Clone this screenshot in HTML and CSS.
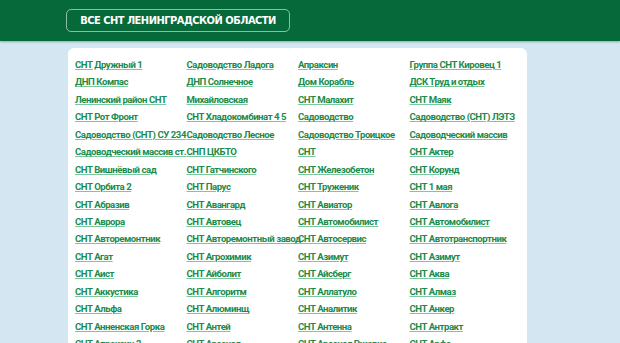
FILE: index.html
```html
<!doctype html>
<html lang="ru">
    <head>
        <meta charset="UTF-8" />
        <meta name="viewport" content="width=device-width, initial-scale=1.0" />
        <title>Все СНТ Ленинградской области</title>
        <link rel="stylesheet" href="styles.css">
    </head>
    <body>
        <header class="top-bar">
            <a class="title-btn" href="#">Все СНТ Ленинградской области</a>
        </header>

        <main class="list-card">
            <ul class="snt-list">
                <li><a href="#">СНТ Дружный 1</a></li>
                <li><a href="#">Садоводство Ладога</a></li>
                <li><a href="#">Апраксин</a></li>
                <li><a href="#">Группа СНТ Кировец 1</a></li>

                <li><a href="#">ДНП Компас</a></li>
                <li><a href="#">ДНП Солнечное</a></li>
                <li><a href="#">Дом Корабль</a></li>
                <li><a href="#">ДСК Труд и отдых</a></li>

                <li><a href="#">Ленинский район СНТ</a></li>
                <li><a href="#">Михайловская</a></li>
                <li><a href="#">СНТ Малахит</a></li>
                <li><a href="#">СНТ Маяк</a></li>

                <li><a href="#">СНТ Рот Фронт</a></li>
                <li><a href="#">СНТ Хладокомбинат 4 5</a></li>
                <li><a href="#">Садоводство</a></li>
                <li><a href="#">Садоводство (СНТ) ЛЭТЗ</a></li>

                <li><a href="#">Садоводство (СНТ) СУ 234</a></li>
                <li><a href="#">Садоводство Лесное</a></li>
                <li><a href="#">Садоводство Троицкое</a></li>
                <li><a href="#">Садоводческий массив</a></li>

                <li><a href="#">Садоводческий массив ст.</a></li>
                <li><a href="#">СНП ЦКБТО</a></li>
                <li><a href="#">СНТ</a></li>
                <li><a href="#">СНТ Актер</a></li>

                <li><a href="#">СНТ Вишнёвый сад</a></li>
                <li><a href="#">СНТ Гатчинского</a></li>
                <li><a href="#">СНТ Железобетон</a></li>
                <li><a href="#">СНТ Корунд</a></li>

                <li><a href="#">СНТ Орбита 2</a></li>
                <li><a href="#">СНТ Парус</a></li>
                <li><a href="#">СНТ Труженик</a></li>
                <li><a href="#">СНТ 1 мая</a></li>

                <li><a href="#">СНТ Абразив</a></li>
                <li><a href="#">СНТ Авангард</a></li>
                <li><a href="#">СНТ Авиатор</a></li>
                <li><a href="#">СНТ Авлога</a></li>

                <li><a href="#">СНТ Аврора</a></li>
                <li><a href="#">СНТ Автовец</a></li>
                <li><a href="#">СНТ Автомобилист</a></li>
                <li><a href="#">СНТ Автомобилист</a></li>

                <li><a href="#">СНТ Авторемонтник</a></li>
                <li><a href="#">СНТ Авторемонтный завод</a></li>
                <li><a href="#">СНТ Автосервис</a></li>
                <li><a href="#">СНТ Автотранспортник</a></li>

                <li><a href="#">СНТ Агат</a></li>
                <li><a href="#">СНТ Агрохимик</a></li>
                <li><a href="#">СНТ Азимут</a></li>
                <li><a href="#">СНТ Азимут</a></li>

                <li><a href="#">СНТ Аист</a></li>
                <li><a href="#">СНТ Айболит</a></li>
                <li><a href="#">СНТ Айсберг</a></li>
                <li><a href="#">СНТ Аква</a></li>

                <li><a href="#">СНТ Аккустика</a></li>
                <li><a href="#">СНТ Алгоритм</a></li>
                <li><a href="#">СНТ Аллатуло</a></li>
                <li><a href="#">СНТ Алмаз</a></li>

                <li><a href="#">СНТ Альфа</a></li>
                <li><a href="#">СНТ Алюминщ</a></li>
                <li><a href="#">СНТ Аналитик</a></li>
                <li><a href="#">СНТ Анкер</a></li>

                <li><a href="#">СНТ Анненская Горка</a></li>
                <li><a href="#">СНТ Антей</a></li>
                <li><a href="#">СНТ Антенна</a></li>
                <li><a href="#">СНТ Антракт</a></li>

                <li><a href="#">СНТ Апраксин 2</a></li>
                <li><a href="#">СНТ Арсенал</a></li>
                <li><a href="#">СНТ Арсенал Ржевка</a></li>
                <li><a href="#">СНТ Арфа</a></li>
            </ul>
        </main>
    </body>
</html>
```

FILE: styles.css
```css
body {
    font-family: Roboto, "Liberation Sans", sans-serif;
    margin: 0;
    padding: 0;
    background-color: #d4e6f1;
}

.top-bar {
    height: 41px;
    background-color: #05693a;
    box-shadow: 0 1px 2px rgba(0, 60, 30, 0.35);
    padding: 9px 0 0 66px;
    box-sizing: border-box;
}

.title-btn {
    display: inline-block;
    width: 224px;
    height: 23px;
    line-height: 21px;
    box-sizing: border-box;
    border: 1px solid rgba(255, 255, 255, 0.55);
    border-radius: 5px;
    color: #fff;
    text-decoration: none;
    text-transform: uppercase;
    text-align: center;
    font-family: "DejaVu Sans Condensed", "DejaVu Sans", sans-serif;
    font-weight: bold;
    font-size: 11px;
    letter-spacing: -0.5px;
}

.list-card {
    width: 459px;
    margin: 7px 0 0 68px;
    padding: 7px 0 0 7px;
    box-sizing: border-box;
    background-color: #fff;
    border-radius: 6px;
}

.snt-list {
    list-style: none;
    margin: 0;
    padding: 0;
    display: grid;
    grid-template-columns: repeat(4, 111.5px);
}

.snt-list li {
    height: 17.45px;
    line-height: 16px;
    white-space: nowrap;
}

.snt-list a {
    color: #1b8c4b;
    font-size: 9.6px;
    font-weight: bold;
    letter-spacing: -0.45px;
    text-decoration: underline;
    text-decoration-color: #7cc79d;
    text-underline-offset: 1px;
}
```
